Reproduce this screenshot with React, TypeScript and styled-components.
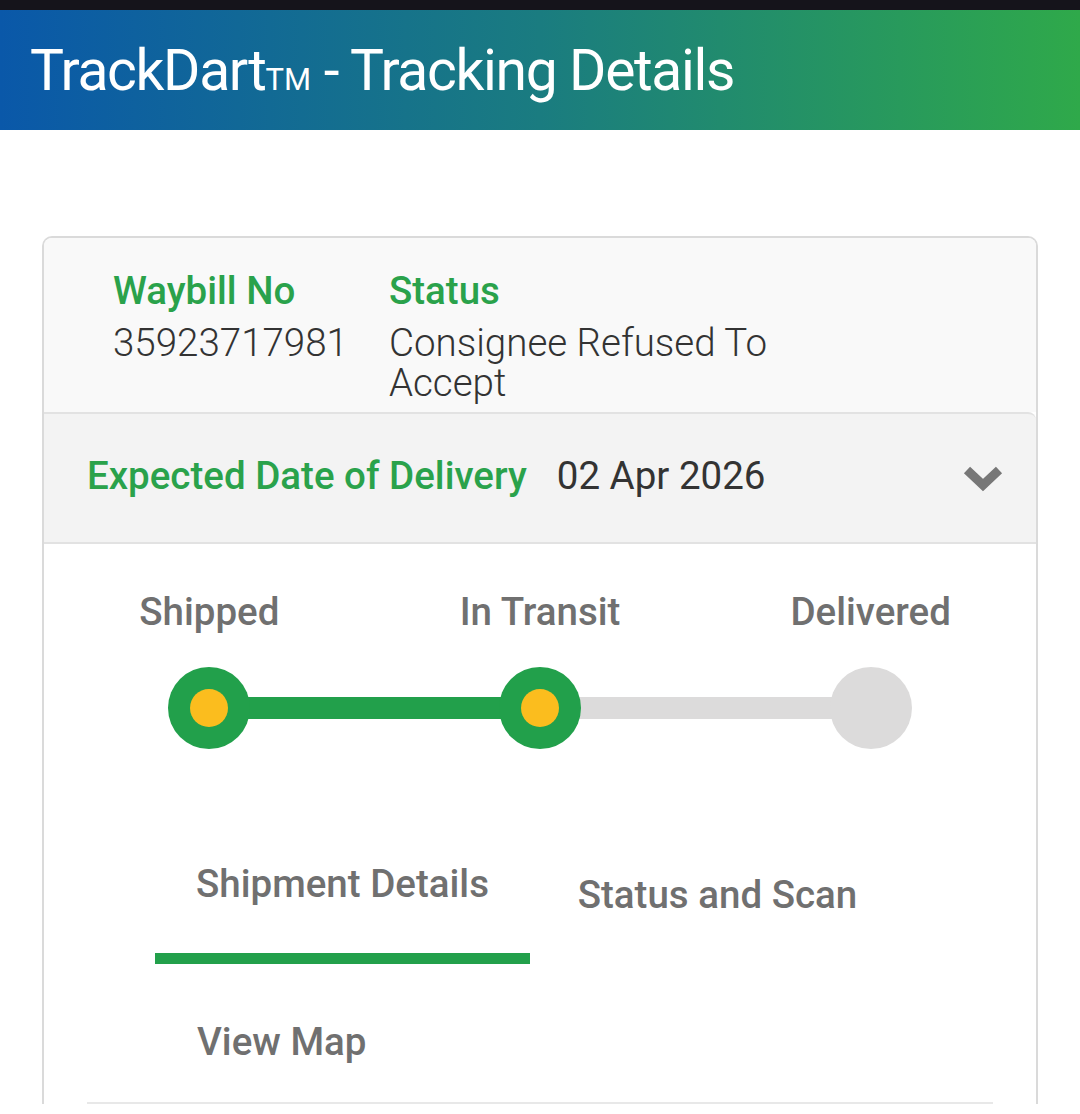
import React from "react";
import styled, {createGlobalStyle} from "styled-components";

const GlobalStyle = createGlobalStyle`
  body {
    margin: 0;
    background: #ffffff;
    font-family: Roboto, "Noto Sans", sans-serif;
  }
`

const StatusBar = styled.div`
  height: 10px;
  background: #15141b;
`

const Header = styled.header`
  height: 120px;
  display: flex;
  align-items: center;
  padding-left: 30px;
  background: linear-gradient(90deg, #0a58a9 0%, #1a7c80 50%, #2fa94a 100%);
`

const Title = styled.h1`
  margin: 0;
  color: #ffffff;
  font-weight: 400;
  font-size: 57px;
  letter-spacing: -1.35px;
`

const Trademark = styled.span`
  font-size: 31px;
  letter-spacing: 0;
`

const Page = styled.main`
  padding: 106px 42px 0;
`

const Card = styled.section`
  border: 2px solid #dadada;
  border-bottom: none;
  border-radius: 10px 10px 0 0;
  overflow: hidden;
`

const Summary = styled.div`
  display: flex;
  gap: 41px;
  padding: 31px 0 9px 69px;
  background: #f9f9f9;
`

const Field = styled.div<{ $width?: number }>`
  width: ${p => (p.$width ? `${p.$width}px` : "auto")};
`

const Label = styled.div`
  color: #2aa24b;
  font-weight: 500;
  font-size: 38.5px;
  line-height: 44px;
`

const Value = styled.div`
  margin-top: 10px;
  color: #333333;
  font-weight: 300;
  font-size: 38.5px;
  line-height: 40px;
`

const DeliveryRow = styled.div`
  display: flex;
  align-items: center;
  height: 128px;
  padding: 0 32px 0 43px;
  background: #f3f3f3;
  border-top: 2px solid #e2e2e2;
  border-bottom: 2px solid #e2e2e2;
  border-radius: 0 8px 0 0;
`

const DeliveryLabel = styled.span`
  color: #2aa24b;
  font-weight: 500;
  font-size: 38.5px;
  margin: -5px 30px 0 0;
`

const DeliveryDate = styled.span`
  flex: 1;
  margin-top: -5px;
  color: #333333;
  font-size: 38.5px;
`

const Chevron = () => (
    <svg width="42" height="28" viewBox="0 0 42 28">
        <polyline points="5,6 21,21 37,6" fill="none" stroke="#777777" strokeWidth="9"/>
    </svg>
)

const Body = styled.div`
  background: #ffffff;
  padding-top: 46px;
`

const Steps = styled.div`
  display: grid;
  grid-template-columns: repeat(3, 1fr);
`

const Step = styled.div`
  display: flex;
  flex-direction: column;
  align-items: center;
  gap: 33px;
`

const StepLabel = styled.div`
  color: #707070;
  font-weight: 500;
  font-size: 38.5px;
  line-height: 44px;
`

const Track = styled.div`
  position: relative;
  display: flex;
  align-items: center;
  justify-content: center;
  width: 100%;
  height: 82px;
`

const Rail = styled.div<{ $side: "left" | "right"; $done: boolean }>`
  position: absolute;
  top: 30px;
  height: 22px;
  width: 50%;
  ${p => (p.$side === "left" ? "left: 0;" : "right: 0;")}
  background: ${p => (p.$done ? "#22a04b" : "#dcdbdb")};
`

const Dot = styled.div<{ $done: boolean }>`
  position: relative;
  width: 82px;
  height: 82px;
  border-radius: 50%;
  background: ${p => (p.$done ? "#22a04b" : "#dcdbdb")};
  display: flex;
  align-items: center;
  justify-content: center;
`

const Core = styled.div`
  width: 38px;
  height: 38px;
  border-radius: 50%;
  background: #fbbd1e;
`

const Tabs = styled.div`
  display: flex;
  flex-wrap: wrap;
  margin: 65px 43px 0;
  padding-left: 68px;
  border-bottom: 2px solid #e8e8e8;
`

const Tab = styled.div<{ $active?: boolean }>`
  width: 375px;
  box-sizing: border-box;
  color: #707070;
  font-weight: 500;
  font-size: 38.5px;
  line-height: 44px;
  text-align: center;
  padding: ${p => (p.$active ? "48px 0 47px" : "59px 0 36px")};
  border-bottom: 11px solid ${p => (p.$active ? "#22a04b" : "transparent")};
`

const MapTab = styled(Tab)`
  text-align: left;
  padding: 56px 0 38px 42px;
  border-bottom: none;
`

const steps = [
    {label: "Shipped", done: true},
    {label: "In Transit", done: true},
    {label: "Delivered", done: false},
]

const App = () => {
    return (
        <>
            <GlobalStyle/>
            <StatusBar/>
            <Header>
                <Title>TrackDart<Trademark>TM</Trademark> - Tracking Details</Title>
            </Header>
            <Page>
                <Card>
                    <Summary>
                        <Field>
                            <Label>Waybill No</Label>
                            <Value>35923717981</Value>
                        </Field>
                        <Field $width={420}>
                            <Label>Status</Label>
                            <Value>Consignee Refused To Accept</Value>
                        </Field>
                    </Summary>
                    <DeliveryRow>
                        <DeliveryLabel>Expected Date of Delivery</DeliveryLabel>
                        <DeliveryDate>02 Apr 2026</DeliveryDate>
                        <Chevron/>
                    </DeliveryRow>
                    <Body>
                        <Steps>
                            {steps.map((s, i) => (
                                <Step key={s.label}>
                                    <StepLabel>{s.label}</StepLabel>
                                    <Track>
                                        {i > 0 && <Rail $side="left" $done={s.done}/>}
                                        {i < steps.length - 1 && <Rail $side="right" $done={steps[i + 1].done}/>}
                                        <Dot $done={s.done}>{s.done && <Core/>}</Dot>
                                    </Track>
                                </Step>
                            ))}
                        </Steps>
                        <Tabs>
                            <Tab $active>Shipment Details</Tab>
                            <Tab>Status and Scan</Tab>
                            <MapTab>View Map</MapTab>
                        </Tabs>
                    </Body>
                </Card>
            </Page>
        </>
    );
}

export default App;
